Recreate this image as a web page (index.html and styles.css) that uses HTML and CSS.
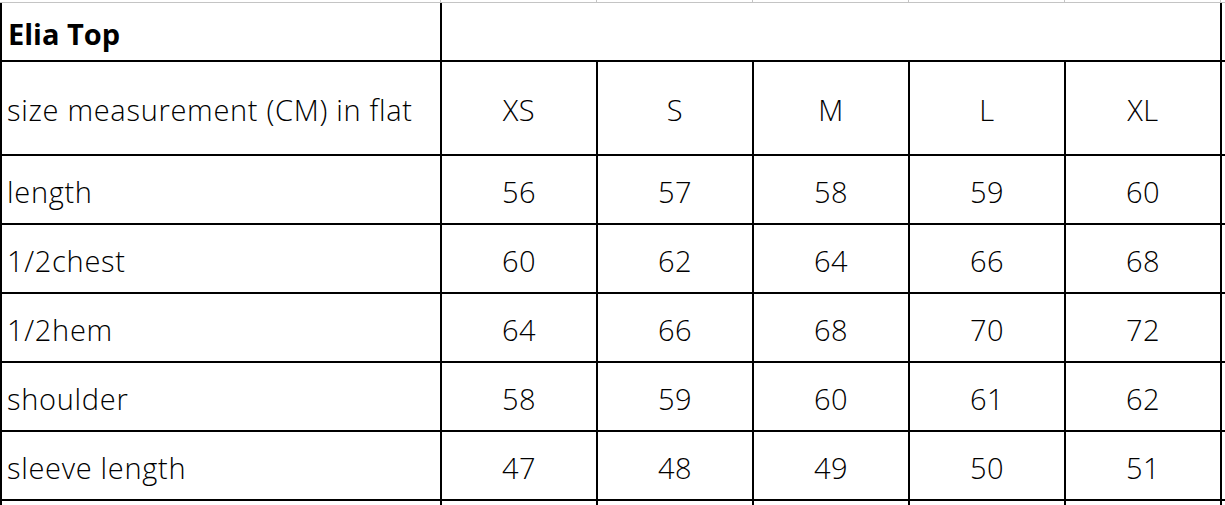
FILE: index.html
```html
<!DOCTYPE html>
<html>
<head>
<meta charset="utf-8">
<link rel="stylesheet" href="styles.css">
</head>
<body>
<div class="sheet">
  <div class="strip">
    <div></div><div></div><div></div><div></div><div></div><div></div><div class="edge"></div>
  </div>
  <div class="grid">
    <div class="cell title">Elia Top</div>
    <div class="cell span5"></div>
    <div class="cell pad"></div>

    <div class="cell label">size measurement (CM) in flat</div>
    <div class="cell num">XS</div>
    <div class="cell num">S</div>
    <div class="cell num">M</div>
    <div class="cell num">L</div>
    <div class="cell num">XL</div>
    <div class="cell pad"></div>

    <div class="cell label">length</div>
    <div class="cell num">56</div><div class="cell num">57</div><div class="cell num">58</div><div class="cell num">59</div><div class="cell num">60</div>
    <div class="cell pad"></div>

    <div class="cell label">1/2chest</div>
    <div class="cell num">60</div><div class="cell num">62</div><div class="cell num">64</div><div class="cell num">66</div><div class="cell num">68</div>
    <div class="cell pad"></div>

    <div class="cell label">1/2hem</div>
    <div class="cell num">64</div><div class="cell num">66</div><div class="cell num">68</div><div class="cell num">70</div><div class="cell num">72</div>
    <div class="cell pad"></div>

    <div class="cell label">shoulder</div>
    <div class="cell num">58</div><div class="cell num">59</div><div class="cell num">60</div><div class="cell num">61</div><div class="cell num">62</div>
    <div class="cell pad"></div>

    <div class="cell label">sleeve length</div>
    <div class="cell num">47</div><div class="cell num">48</div><div class="cell num">49</div><div class="cell num">50</div><div class="cell num">51</div>
    <div class="cell pad"></div>

    <div class="cell"></div><div class="cell"></div><div class="cell"></div><div class="cell"></div><div class="cell"></div><div class="cell"></div><div class="cell pad"></div>
  </div>
</div>
</body>
</html>
```

FILE: styles.css
```css
html, body {
  margin: 0;
  padding: 0;
  background: #ffffff;
  overflow: hidden;
}
.sheet {
  width: 1225px;
  height: 505px;
  overflow: hidden;
  font-family: "Open Sans", "Noto Sans", sans-serif;
  color: #000;
}
.strip {
  display: grid;
  grid-template-columns: 441px 156px 156px 156px 156px 156px 4px;
  height: 2px;
  border-bottom: 1px solid #c4c4c4;
}
.strip > div {
  border-right: 1px solid #c4c4c4;
}
.strip > .edge {
  border-right: none;
}
.grid {
  display: grid;
  grid-template-columns: 438px 154px 154px 154px 154px 154px 3px;
  grid-template-rows: 57px 92px 67px 67px 67px 67px 67px 20px;
  gap: 2px;
  padding-left: 2px;
  background: #000;
}
.cell {
  background: #fff;
  display: flex;
  align-items: center;
  font-size: 29px;
  font-weight: 300;
  white-space: nowrap;
  overflow: hidden;
}
.span5 {
  grid-column: span 5;
}
.title {
  font-weight: 700;
  padding-left: 6px;
  padding-top: 3px;
  font-size: 29px;
}
.label {
  padding-left: 5px;
  padding-top: 3px;
  letter-spacing: 0.7px;
}
.num {
  justify-content: center;
  padding-top: 3px;
  letter-spacing: 0.5px;
}
```
